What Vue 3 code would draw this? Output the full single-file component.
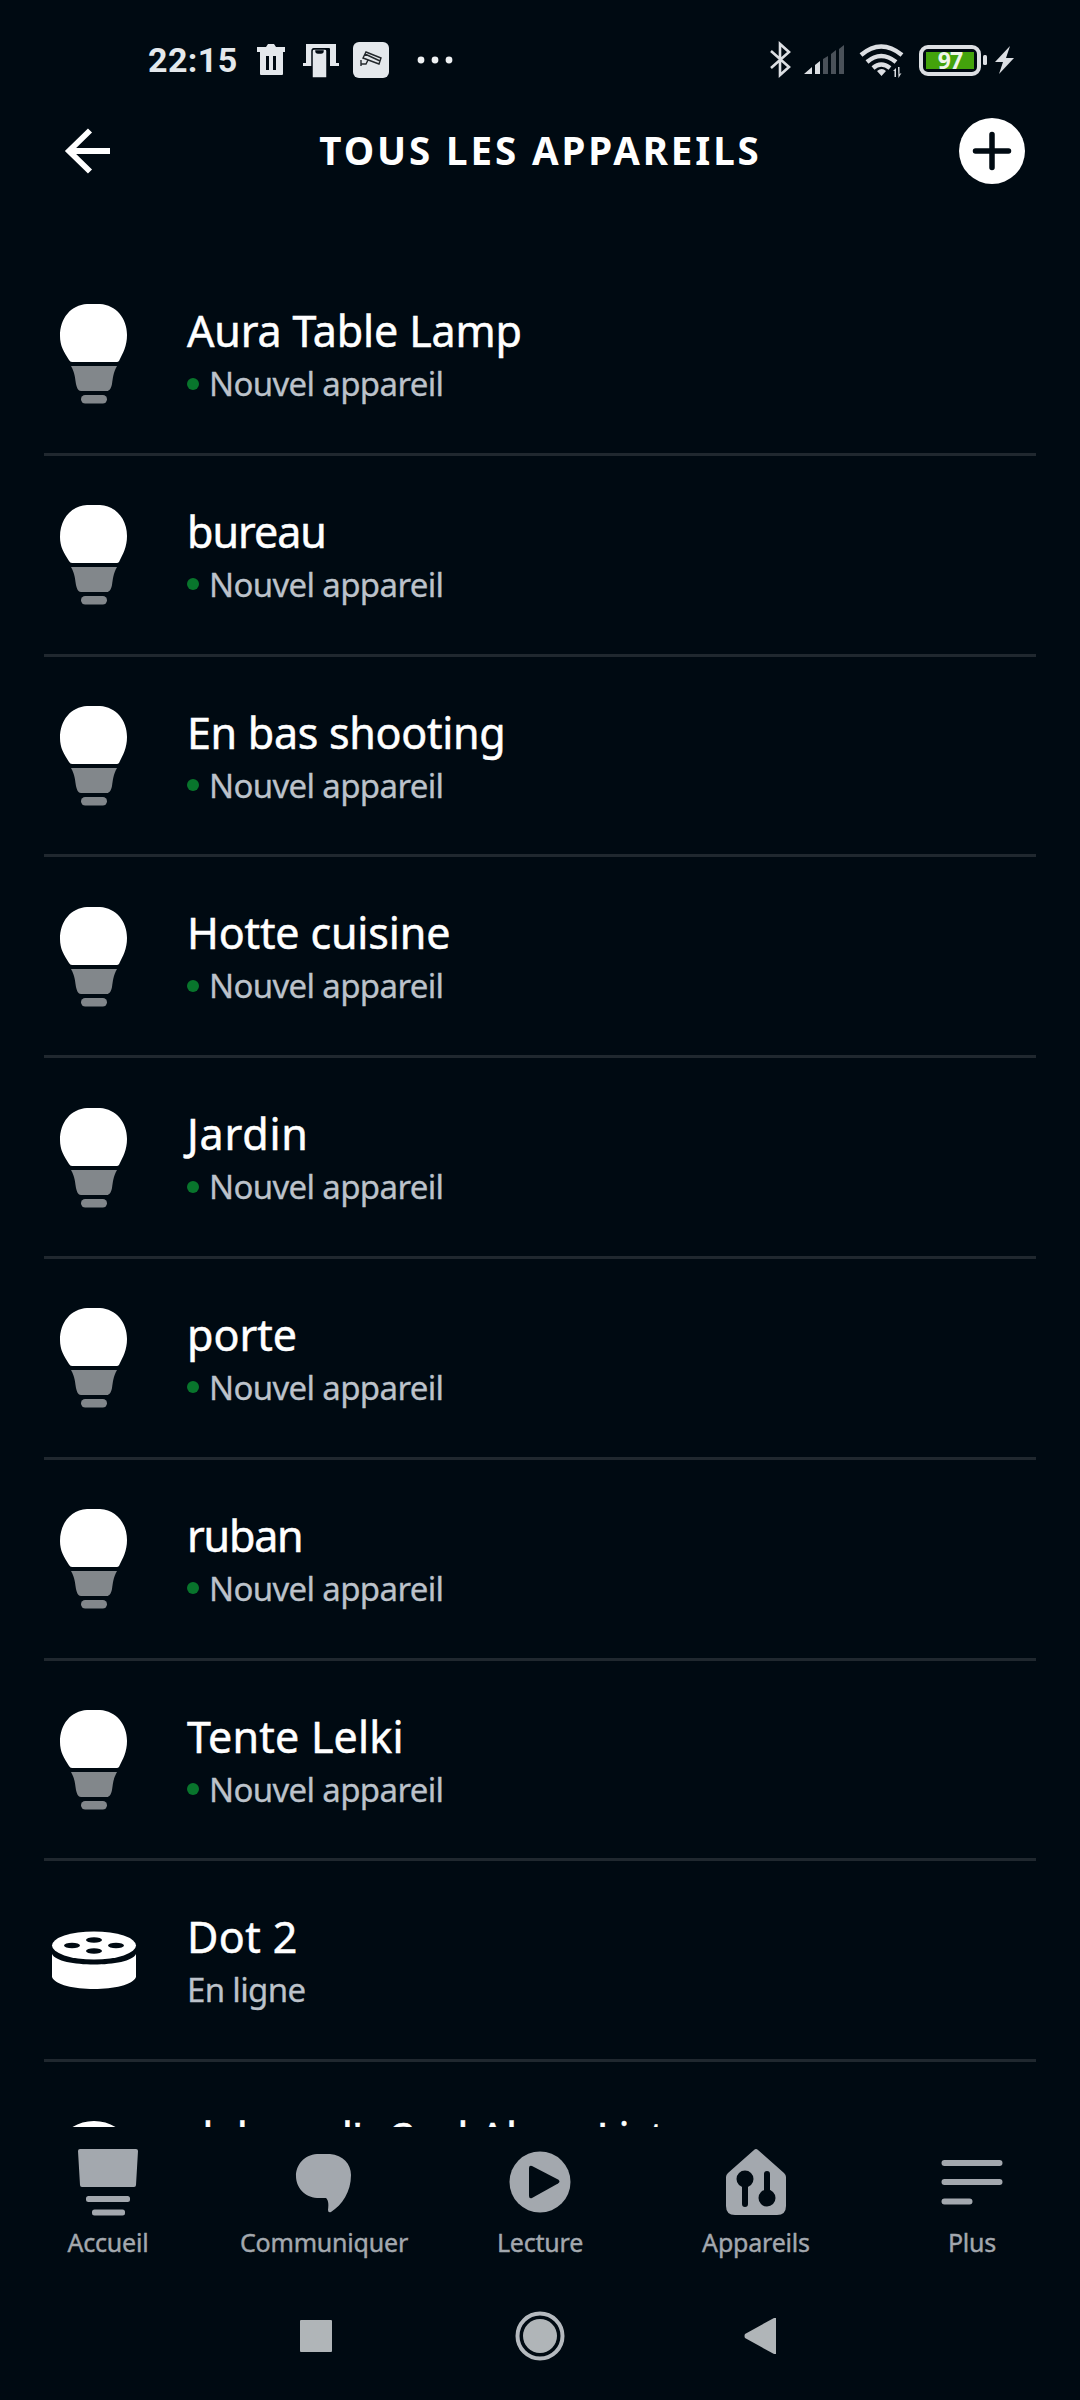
<template>
    <div class="screen">
        <!-- Status bar -->
        <div class="status">
            <span class="clock">22:15</span>
            <svg class="left-icons" width="156" height="40" viewBox="0 0 156 40" fill="#e4e8ec">
                <path d="M0 7h9l2-3h6l2 3h9v5h-2v22q0 1-1 1H4q-1 0-1-1V12H0zM9 16v14h3V16zm7 0v14h3V16z" fill-rule="evenodd" />
                <path d="M49 4h30v19h3v3h-9V9q0-1-1-1H57q-2 0-2 2v16h-9v-3h3z" />
                <path d="M55 11q0-2 2-2h11q2 0 2 2v27H55zM59 11q0 2 2 2h3q2 0 2-2z" fill-rule="evenodd" stroke="#000a12" stroke-width="1.5" />
                <rect x="96" y="2" width="36" height="36" rx="6" />
                <g fill="none" stroke="#23282c" stroke-width="1.4">
                    <path d="M109 12l15 6-2 6-16-6zM108 14l15 7M111 20l-2 4h-5M104 20v6" />
                </g>
            </svg>
            <svg class="dots" width="36" height="8" viewBox="0 0 36 8" fill="#eef1f3">
                <circle cx="4" cy="4" r="3.4" />
                <circle cx="18" cy="4" r="3.4" />
                <circle cx="32" cy="4" r="3.4" />
            </svg>
            <svg class="right-icons" width="150" height="40" viewBox="0 0 150 40" fill="#dcdfe3">
                <path d="M2 11l18 16-9 8V4l9 8L2 28" fill="none" stroke="#dcdfe3" stroke-width="2.6" />
                <path d="M35 34l8-7v7zM46 25l5-4v13h-5z" />
                <path d="M54 19l5-3v18h-5zM62 14l5-4v24h-5zM70 9l5-4v29h-5z" fill="#4a5159" />
                <g fill="none" stroke="#dcdfe3" stroke-width="4.4">
                    <path d="M92 15q20-17 41 0M98 22q14-12 29 0M104 28q8-7 17 0" />
                </g>
                <path d="M108 31q5-4 9 0l-4.500 5zM124 31l3-3v9h-1.500v-6zM129 27h1.500v7l2-1-3 5z" />
            </svg>
            <div class="battery"><span class="level">97</span></div>
            <svg class="bolt" width="32" height="30" viewBox="0 0 32 30" fill="#dcdfe3">
                <rect x="0" y="10" width="4" height="10" rx="1.500" />
                <path d="M27 1L12 17h8l-4 12 15-16h-8z" />
            </svg>
        </div>

        <!-- Title bar -->
        <header class="topbar">
            <svg class="back" width="46" height="44" viewBox="0 0 46 44" fill="none" stroke="#fff" stroke-width="5.800">
                <path d="M25 1.500L4 22l21 20.500M3 22h42" />
            </svg>
            <h1>TOUS LES APPAREILS</h1>
            <svg class="add" width="66" height="66" viewBox="0 0 66 66">
                <circle cx="33" cy="33" r="33" fill="#fff" />
                <path d="M33 16.500v33M16.500 33h33" stroke="#000a12" stroke-width="5.500" stroke-linecap="round" />
            </svg>
        </header>

        <!-- Devices -->
        <main class="list">
            <div v-for="device in devices" :key="device.name" class="device">
                <div class="icon">
                    <svg v-if="device.type === 'bulb'" width="68" height="100" viewBox="0 0 68 100">
                        <path d="M27 0h13C56 1 67 14 67 31c0 11-4 18-8 26q-1 1-2 1H12q-2 0-3-2C4 48 0 42 0 32 0 14 11 1 27 0z" fill="#fff" />
                        <path d="M11 62h46c-4 7-4 12-5 18-1 5-3 7-5 7H21c-3 0-4-3-5-7-1-6-1-11-5-18z" fill="#82878b" />
                        <rect x="21" y="91" width="26" height="8.500" rx="4.200" fill="#82878b" />
                    </svg>
                    <svg v-else-if="device.type === 'dot'" width="84" height="60" viewBox="0 0 84 60">
                        <path d="M0 23c6 14 78 14 84 0v23c-6 16-78 16-84 0z" fill="#fff" />
                        <ellipse cx="42" cy="14.500" rx="42" ry="14" fill="#fff" />
                        <g fill="#000a12">
                            <ellipse cx="42" cy="9" rx="8" ry="2.800" />
                            <ellipse cx="20" cy="14.500" rx="8" ry="2.800" />
                            <ellipse cx="64" cy="14.500" rx="8" ry="2.800" />
                            <ellipse cx="42" cy="20" rx="8" ry="2.800" />
                        </g>
                    </svg>
                    <svg v-else width="82" height="82" viewBox="0 0 82 82">
                        <circle cx="41" cy="41" r="38" fill="none" stroke="#fff" stroke-width="6" />
                    </svg>
                </div>
                <div class="text">
                    <div class="name" :style="{ letterSpacing: `${device.spacing}px` }">{{ device.name }}</div>
                    <div v-if="device.state" class="state"><i v-if="device.isNew"></i>{{ device.state }}</div>
                </div>
            </div>
        </main>

        <!-- Tabs -->
        <nav class="tabs">
            <div v-for="tab in tabs" :key="tab" class="tab">
                <svg width="70" height="72" viewBox="0 0 70 72" fill="#a3a8ae">
                    <g v-if="tab === 'Accueil'">
                        <path d="M7 3h56q2 0 2 2l-2 34q0 2-2 2H9q-2 0-2-2L5 5q0-2 2-2z" />
                        <rect x="13" y="50" width="44" height="6" rx="2.500" />
                        <rect x="19" y="63.500" width="33" height="6" rx="2.500" />
                    </g>
                    <path v-else-if="tab === 'Communiquer'" d="M28 8h13C54 9 62 18 62 29c0 17-9 30-20 37q-3 1-3-2c1-7 0-10-2-12H28C15 51 7 41 7 30S15 9 28 8z" />
                    <g v-else-if="tab === 'Lecture'">
                        <circle cx="35" cy="36" r="30.500" />
                        <path d="M24 22q0-3 3-2l26 13.500q3 2 0 4L27 52q-3 1-3-2z" fill="#000a12" />
                    </g>
                    <g v-else-if="tab === 'Appareils'">
                        <path d="M33 4q2-2 4 0l26 23q2 2 2 4v29q0 9-9 9H14q-9 0-9-9V31q0-2 2-4z" />
                        <g fill="#000a12" stroke="#000a12" stroke-width="6" stroke-linecap="round">
                            <circle cx="24" cy="33" r="5.500" />
                            <path d="M24 33v25M46 28v25" />
                            <circle cx="46" cy="52" r="5.500" />
                        </g>
                    </g>
                    <path v-else d="M7.500 17h55M7.500 36h55M7.500 55.500h25" stroke="#a3a8ae" stroke-width="6" stroke-linecap="round" />
                </svg>
                <span>{{ tab }}</span>
            </div>
        </nav>

        <!-- Android buttons -->
        <div class="system">
            <svg width="32" height="32" viewBox="0 0 32 32"><rect width="32" height="32" rx="1" fill="#b0b5b8" /></svg>
            <svg class="home" width="50" height="50" viewBox="0 0 50 50">
                <circle cx="25" cy="25" r="22.500" fill="none" stroke="#b5babf" stroke-width="4" />
                <circle cx="25" cy="25" r="17" fill="#b0b5b8" />
            </svg>
            <svg width="32" height="36" viewBox="0 0 32 36"><path d="M32 0v36h-2L1 20q-1-2 0-4L30 0z" fill="#b0b5b8" /></svg>
        </div>
    </div>
</template>

<script setup>
const fresh = { type: 'bulb', isNew: true, state: 'Nouvel appareil' }
const devices = [
    { name: 'Aura Table Lamp', spacing: -0.15, ...fresh },
    { name: 'bureau', spacing: -1, ...fresh },
    { name: 'En bas shooting', spacing: -0.3, ...fresh },
    { name: 'Hotte cuisine', spacing: -0.15, ...fresh },
    { name: 'Jardin', spacing: 0.8, ...fresh },
    { name: 'porte', spacing: 0, ...fresh },
    { name: 'ruban', spacing: -1.2, ...fresh },
    { name: 'Tente Lelki', spacing: 0.2, ...fresh },
    { name: 'Dot 2', spacing: 0.4, type: 'dot', state: 'En ligne' },
    { name: "dahmed's 2nd Alexa List", spacing: -0.4, type: 'list' },
]
const tabs = ['Accueil', 'Communiquer', 'Lecture', 'Appareils', 'Plus']
</script>

<style>
body {
    margin: 0;
    background: #000a12;
}
</style>

<style scoped>
.screen {
    width: 1080px;
    height: 2400px;
    display: flex;
    flex-direction: column;
    overflow: hidden;
    background: #000a12;
    color: #fff;
    font-family: "Noto Sans", sans-serif;
}

svg {
    display: block;
    flex-shrink: 0;
    overflow: visible;
}

.status {
    height: 100px;
    padding-top: 20px;
    box-sizing: border-box;
    display: flex;
    align-items: center;
    flex-shrink: 0;
}

.clock {
    width: 109px;
    margin-left: 148px;
    font: 700 34px Roboto, sans-serif;
    letter-spacing: 0.4px;
    color: #e4e8ec;
}

.dots {
    margin-left: 4px;
}

.right-icons {
    margin-left: 316px;
}

.battery {
    width: 62px;
    height: 31px;
    margin-left: 0;
    padding: 3px;
    box-sizing: border-box;
    border: 4px solid #dcdfe3;
    border-radius: 9px;
}

.level {
    display: block;
    height: 17px;
    background: #43a30c;
    color: #eef5ea;
    font-size: 23px;
    font-weight: 700;
    line-height: 17px;
    letter-spacing: -1px;
    text-align: center;
}

.bolt {
    margin-left: 2px;
}

.topbar {
    height: 102px;
    padding: 0 55px 0 65px;
    display: flex;
    align-items: center;
    justify-content: space-between;
    flex-shrink: 0;
}

h1 {
    margin: 0 0 3px 11px;
    font-size: 38.5px;
    font-weight: 700;
    letter-spacing: 2.9px;
    white-space: nowrap;
}

.list {
    height: 1925px;
    padding: 53px 44px 0;
    box-sizing: border-box;
    overflow: hidden;
    flex-shrink: 0;
}

.device {
    height: 200.8px;
    box-sizing: border-box;
    border-bottom: 3px solid #20282f;
    display: flex;
}

.icon {
    width: 98px;
    padding: 1px 0 0 1px;
    box-sizing: border-box;
    display: flex;
    align-items: center;
    justify-content: center;
}

.text {
    margin-left: 45px;
    padding-top: 46px;
}

.name {
    font-size: 43px;
    line-height: 60px;
    white-space: nowrap;
    -webkit-text-stroke: 0.5px #fff;
}

.state {
    display: flex;
    align-items: center;
    font-size: 33px;
    line-height: 45px;
    letter-spacing: -0.65px;
    color: #bcc2ca;
    -webkit-text-stroke: 0.3px #bcc2ca;
}

.state i {
    width: 12px;
    height: 12px;
    margin-right: 10px;
    border-radius: 50%;
    background: #08752c;
}

.tabs {
    height: 144px;
    padding-top: 19px;
    box-sizing: border-box;
    display: grid;
    grid-template-columns: repeat(5, 216px);
    flex-shrink: 0;
}

.tab {
    display: flex;
    flex-direction: column;
    align-items: center;
    font-size: 25px;
    line-height: 40px;
    letter-spacing: -0.2px;
    gap: 4px;
    color: #a3a8ae;
    -webkit-text-stroke: 0.4px #a3a8ae;
}

.system {
    padding: 0 304px 0 300px;
    flex: 1;
    display: flex;
    align-items: center;
    justify-content: space-between;
}

.home {
    margin-left: 3px;
}
</style>
